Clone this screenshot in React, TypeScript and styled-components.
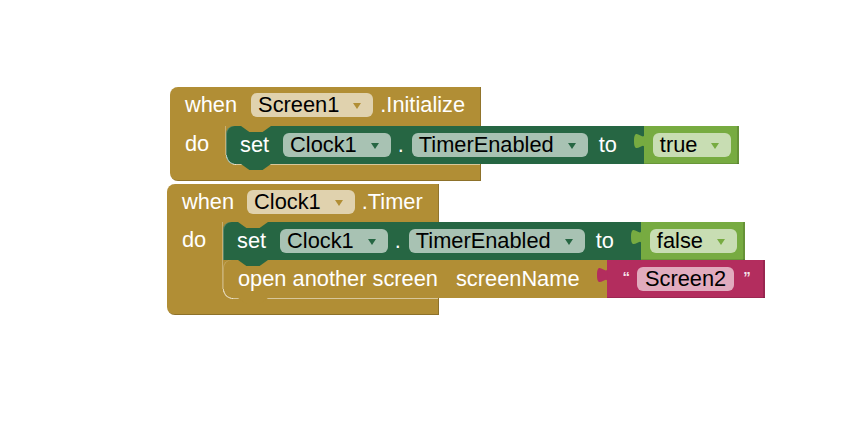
import React from "react";
import styled, { createGlobalStyle } from "styled-components";

const COLORS = {
  control: "#b18e35",
  setter: "#266643",
  logic: "#77ab41",
  text: "#b32d5e",
};

const NOTCH = "polygon(0 0, 100% 0, 72% 100%, 28% 100%)";

const GlobalStyle = createGlobalStyle`
  html, body { margin: 0; padding: 0; background: #ffffff; }
  #root { width: 849px; height: 429px; }
`;

const Canvas = styled.div`
  position: relative;
  width: 849px;
  height: 429px;
  overflow: hidden;
  background: #ffffff;
  font-family: "Liberation Sans", Arial, sans-serif;
  font-size: 21.8px;
  color: #ffffff;
`;

const EventBlock = styled.div<{ $x: number; $y: number; $w: number }>`
  position: absolute;
  left: ${(p) => p.$x}px;
  top: ${(p) => p.$y}px;
  width: ${(p) => p.$w}px;
  display: flex;
  flex-direction: column;
`;

const Header = styled.div<{ $h: number }>`
  display: flex;
  align-items: flex-start;
  height: ${(p) => p.$h}px;
  box-sizing: border-box;
  padding: 6px 0 0 15px;
  background: ${COLORS.control};
  border-top-left-radius: 8px;
  box-shadow: inset -1px 0 rgba(0, 0, 0, 0.18);
  white-space: nowrap;
`;

const Text = styled.span<{ $ml?: number }>`
  flex: none;
  line-height: 24px;
  margin-left: ${(p) => p.$ml ?? 0}px;
  color: #ffffff;
`;

const Field = styled.span<{ $ml?: number; $plain?: boolean }>`
  flex: none;
  display: inline-flex;
  align-items: center;
  height: 24px;
  box-sizing: border-box;
  padding: 0 ${(p) => (p.$plain ? 8 : 12)}px 0 ${(p) => (p.$plain ? 8 : 7)}px;
  margin-left: ${(p) => p.$ml ?? 0}px;
  border-radius: 6px;
  background: rgba(255, 255, 255, 0.6);
  color: #000000;
  line-height: 24px;
`;

const Arrow = styled.span<{ $c: string }>`
  width: 0;
  height: 0;
  margin: 2px 0 0 14px;
  border-left: 4px solid transparent;
  border-right: 4px solid transparent;
  border-top: 6px solid ${(p) => p.$c};
`;

const Body = styled.div`
  display: flex;
  align-items: stretch;
  background: ${COLORS.control};
`;

const DoArm = styled.div`
  flex: none;
  width: 56px;
  box-sizing: border-box;
  padding-left: 15px;
  line-height: 36px;
  box-shadow: inset -1px 0 rgba(255, 255, 255, 0.3);
`;

const Stack = styled.div`
  flex: none;
  display: flex;
  flex-direction: column;
  align-items: flex-start;
`;

const Row = styled.div`
  display: flex;
  align-items: stretch;
`;

const Stmt = styled.div<{ $c: string; $pl: number; $pr: number }>`
  position: relative;
  flex: none;
  display: flex;
  align-items: center;
  height: 38px;
  box-sizing: border-box;
  padding: 0 ${(p) => p.$pr}px 0 ${(p) => p.$pl}px;
  background: ${(p) => p.$c};
  border-top-left-radius: 8px;
  white-space: nowrap;
  box-shadow: inset 1px 0 rgba(255, 255, 255, 0.22);

  &::before {
    content: "";
    position: absolute;
    top: 0;
    left: 15px;
    width: 30px;
    height: 6px;
    background: ${COLORS.control};
    clip-path: ${NOTCH};
    z-index: 1;
  }

  &::after {
    content: "";
    position: absolute;
    bottom: -6px;
    left: 15px;
    width: 30px;
    height: 6px;
    background: ${(p) => p.$c};
    clip-path: ${NOTCH};
    z-index: 2;
  }
`;

const Value = styled.div<{ $c: string; $pl: number; $pr: number }>`
  position: relative;
  flex: none;
  display: flex;
  align-items: center;
  height: 38px;
  box-sizing: border-box;
  padding: 0 ${(p) => p.$pr}px 0 ${(p) => p.$pl}px;
  background: ${(p) => p.$c};
  white-space: nowrap;
  box-shadow: inset -2px 0 rgba(0, 0, 0, 0.14), inset 0 -1px rgba(0, 0, 0, 0.12);
`;

const TabSvg = styled.svg`
  position: absolute;
  left: -10px;
  top: 2px;
  width: 11px;
  height: 24px;
  overflow: visible;
`;

const Quote = styled.span<{ $ml?: number }>`
  flex: none;
  align-self: flex-start;
  margin-top: 9px;
  margin-left: ${(p) => p.$ml ?? 0}px;
  font-size: 15px;
  font-weight: bold;
  line-height: 15px;
  color: rgba(255, 255, 255, 0.88);
`;

const Foot = styled.div`
  position: relative;
  height: 17px;
  background: ${COLORS.control};
  border-bottom-left-radius: 8px;
  box-shadow: inset -1px -1px rgba(0, 0, 0, 0.2);

  &::before {
    content: "";
    position: absolute;
    left: 65px;
    right: 1px;
    top: 0;
    height: 1px;
    background: rgba(255, 255, 255, 0.5);
  }

  &::after {
    content: "";
    position: absolute;
    left: 55px;
    top: -9px;
    width: 11px;
    height: 10px;
    z-index: 3;
    background: radial-gradient(
      circle at 100% 0,
      transparent 8.6px,
      rgba(255, 255, 255, 0.55) 9px,
      rgba(255, 255, 255, 0.55) 9.8px,
      ${COLORS.control} 10.3px
    );
  }
`;

function Dropdown({ label, color, ml }: { label: string; color: string; ml?: number }) {
  return (
    <Field $ml={ml}>
      {label}
      <Arrow $c={color} />
    </Field>
  );
}

function Tab({ color }: { color: string }) {
  return (
    <TabSvg viewBox="0 0 11 24">
      <path d="M10.5,5 C10.5,15.7 0,-3.5 0,13 S10.5,10.5 10.5,21 Z" fill={color} />
    </TabSvg>
  );
}

export default function App() {
  return (
    <>
      <GlobalStyle />
      <Canvas>
        <EventBlock $x={170} $y={87} $w={311}>
          <Header $h={39}>
            <Text>when</Text>
            <Dropdown label="Screen1" color={COLORS.control} ml={14} />
            <Text $ml={7}>.Initialize</Text>
          </Header>
          <Body>
            <DoArm>do</DoArm>
            <Stack>
              <Row>
                <Stmt $c={COLORS.setter} $pl={14} $pr={27}>
                  <Text>set</Text>
                  <Dropdown label="Clock1" color={COLORS.setter} ml={14} />
                  <Text $ml={7}>.</Text>
                  <Dropdown label="TimerEnabled" color={COLORS.setter} ml={8} />
                  <Text $ml={11}>to</Text>
                </Stmt>
                <Value $c={COLORS.logic} $pl={9} $pr={8}>
                  <Tab color={COLORS.logic} />
                  <Dropdown label="true" color={COLORS.logic} />
                </Value>
              </Row>
            </Stack>
          </Body>
          <Foot />
        </EventBlock>

        <EventBlock $x={167} $y={184} $w={272}>
          <Header $h={38}>
            <Text>when</Text>
            <Dropdown label="Clock1" color={COLORS.control} ml={13} />
            <Text $ml={7}>.Timer</Text>
          </Header>
          <Body>
            <DoArm>do</DoArm>
            <Stack>
              <Row>
                <Stmt $c={COLORS.setter} $pl={14} $pr={27}>
                  <Text>set</Text>
                  <Dropdown label="Clock1" color={COLORS.setter} ml={14} />
                  <Text $ml={7}>.</Text>
                  <Dropdown label="TimerEnabled" color={COLORS.setter} ml={8} />
                  <Text $ml={11}>to</Text>
                </Stmt>
                <Value $c={COLORS.logic} $pl={9} $pr={8}>
                  <Tab color={COLORS.logic} />
                  <Dropdown label="false" color={COLORS.logic} />
                </Value>
              </Row>
              <Row>
                <Stmt $c={COLORS.control} $pl={15} $pr={27}>
                  <Text>open another screen</Text>
                  <Text $ml={18}>screenName</Text>
                </Stmt>
                <Value $c={COLORS.text} $pl={16} $pr={14}>
                  <Tab color={COLORS.text} />
                  <Quote>“</Quote>
                  <Field $plain $ml={7}>Screen2</Field>
                  <Quote $ml={9}>”</Quote>
                </Value>
              </Row>
            </Stack>
          </Body>
          <Foot />
        </EventBlock>
      </Canvas>
    </>
  );
}
